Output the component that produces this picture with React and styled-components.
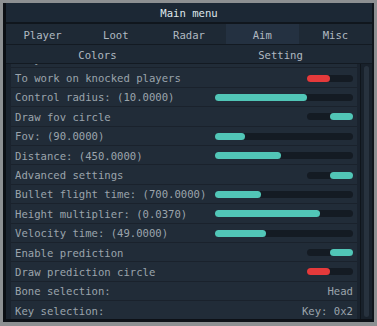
import { useEffect, useRef } from "react";
import styled, { createGlobalStyle } from "styled-components";

const GlobalStyle = createGlobalStyle`
  html, body {
    margin: 0;
    padding: 0;
    background: #8d9092;
  }
  * { box-sizing: border-box; }
`;

const rows = [
  { label: "Only visible", type: "toggle", on: true },
  { label: "To work on knocked players", type: "toggle", on: false },
  { label: "Control radius: (10.0000)", type: "slider", value: 0.67 },
  { label: "Draw fov circle", type: "toggle", on: true },
  { label: "Fov: (90.0000)", type: "slider", value: 0.22 },
  { label: "Distance: (450.0000)", type: "slider", value: 0.48 },
  { label: "Advanced settings", type: "toggle", on: true },
  { label: "Bullet flight time: (700.0000)", type: "slider", value: 0.33 },
  { label: "Height multiplier: (0.0370)", type: "slider", value: 0.76 },
  { label: "Velocity time: (49.0000)", type: "slider", value: 0.37 },
  { label: "Enable prediction", type: "toggle", on: true },
  { label: "Draw prediction circle", type: "toggle", on: false },
  { label: "Bone selection:", type: "text", value: "Head" },
  { label: "Key selection:", type: "text", value: "Key: 0x2" },
];

function App() {
  const listRef = useRef(null);

  useEffect(() => {
    if (listRef.current) listRef.current.scrollTop = 15;
  }, []);

  return (
    <>
      <GlobalStyle />
      <Window>
        <TitleBar>Main menu</TitleBar>
        <TabRow $cols={5} $h={21}>
          <Tab>Player</Tab>
          <Tab>Loot</Tab>
          <Tab>Radar</Tab>
          <Tab $active>Aim</Tab>
          <Tab>Misc</Tab>
        </TabRow>
        <TabRow $cols={2} $h={19}>
          <Tab>Colors</Tab>
          <Tab>Setting</Tab>
        </TabRow>
        <Body>
          <List ref={listRef}>
            {rows.map((r) => (
              <Row key={r.label}>
                <Label>{r.label}</Label>
                {r.type === "slider" && (
                  <Track $w={138}>
                    <Fill style={{ width: `${r.value * 100}%` }} />
                  </Track>
                )}
                {r.type === "toggle" && (
                  <Track $w={46}>
                    <Knob $on={r.on} />
                  </Track>
                )}
                {r.type === "text" && <Label>{r.value}</Label>}
              </Row>
            ))}
          </List>
          <ScrollBar>
            <Thumb />
          </ScrollBar>
        </Body>
      </Window>
    </>
  );
}

export default App;

const Window = styled.div`
  margin: 3px 3px 0 3px;
  width: 371px;
  height: 319px;
  background: #1b2430;
  border-left: 3px solid #0b0f14;
  border-right: 2px solid #0f141a;
  border-bottom: 3px solid #0d1117;
  display: flex;
  flex-direction: column;
  font-family: "DejaVu Sans Mono", "Liberation Mono", monospace;
  font-size: 10.6px;
  color: #aab3bb;
`;

const TitleBar = styled.div`
  height: 21px;
  display: flex;
  align-items: center;
  justify-content: center;
  background: #1c2835;
  color: #dfe6ec;
  border-bottom: 2px solid #10161d;
`;

const TabRow = styled.div`
  display: grid;
  grid-template-columns: repeat(${(p) => p.$cols}, 1fr);
  height: ${(p) => p.$h}px;
  background: #1e2935;
  border-bottom: 1px solid #131a22;
`;

const Tab = styled.div`
  display: flex;
  align-items: center;
  justify-content: center;
  padding-top: 1px;
  background: ${(p) => (p.$active ? "#243141" : "transparent")};
  color: #b0b9c1;
`;

const Body = styled.div`
  flex: 1;
  min-height: 0;
  display: flex;
  padding-left: 5px;
  background: #1a232e;
`;

const List = styled.div`
  flex: 1;
  overflow: hidden;
  padding-right: 3px;
`;

const Row = styled.div`
  height: 19.4px;
  display: flex;
  align-items: center;
  justify-content: space-between;
  padding: 1px 4px 0;
  background: #212c38;
  border-bottom: 1px solid #1a222c;
`;

const Label = styled.span`
  white-space: nowrap;
  color: #9ba4ac;
`;

const Track = styled.div`
  width: ${(p) => p.$w}px;
  height: 7px;
  border-radius: 4px;
  background: #141b23;
  position: relative;
  flex-shrink: 0;
`;

const Fill = styled.div`
  height: 100%;
  border-radius: 4px;
  background: #51c6b7;
`;

const Knob = styled.div`
  position: absolute;
  top: 0;
  width: 23px;
  height: 7px;
  border-radius: 4px;
  left: ${(p) => (p.$on ? "23px" : "0")};
  background: ${(p) => (p.$on ? "#51c6b7" : "#e53a3b")};
`;

const ScrollBar = styled.div`
  width: 12px;
  border-left: 1px solid #0f151b;
  background: #18212b;
  padding: 2px 3px;
  display: flex;
  flex-direction: column;
`;

const Thumb = styled.div`
  flex: 1;
  border-radius: 3px;
  background: #27323e;
`;
